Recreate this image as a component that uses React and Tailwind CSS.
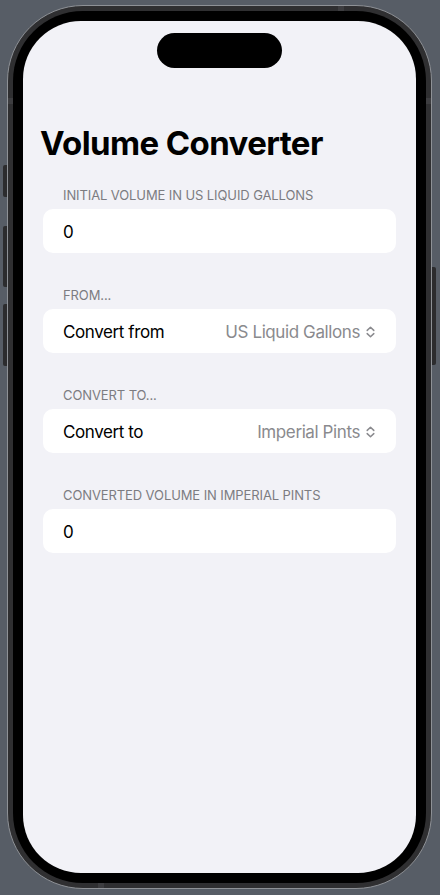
import React from "react";

function UpDown() {
  return (
    <svg width="9" height="12" viewBox="0 0 9 12" fill="none" className="shrink-0 -translate-y-[1px]">
      <path d="M1.2 4.4 L4.5 1.2 L7.8 4.4" stroke="#8a8a8e" strokeWidth="1.5" strokeLinecap="round" strokeLinejoin="round" />
      <path d="M1.2 7.6 L4.5 10.8 L7.8 7.6" stroke="#8a8a8e" strokeWidth="1.5" strokeLinecap="round" strokeLinejoin="round" />
    </svg>
  );
}

function Section({ title, children }) {
  return (
    <div className="flex flex-col">
      <div className="pl-[20px] text-[13px] leading-[16px] text-[#7c7c81] uppercase tracking-[-0.1px]">
        {title}
      </div>
      <div className="mt-[6px] h-[44px] rounded-[10px] bg-white flex items-center pl-[20px] pr-[21px] pt-[4px] text-[17px] tracking-[-0.4px] text-black">
        {children}
      </div>
    </div>
  );
}

function Picker({ label, value }) {
  return (
    <div className="flex w-full items-center justify-between">
      <span>{label}</span>
      <span className="flex items-center gap-[6px] text-[#8a8a8e]">
        {value}
        <UpDown />
      </span>
    </div>
  );
}

export default function App() {
  return (
    <div className="relative w-[440px] h-[895px] overflow-hidden bg-[#575d66] font-['Inter','Noto_Sans',sans-serif]">
      {/* side buttons */}
      <div className="absolute left-[3px] top-[165px] w-[5px] h-[32px] rounded-l-[2px] bg-[#2c2c2e]" />
      <div className="absolute left-[3px] top-[226px] w-[5px] h-[61px] rounded-l-[2px] bg-[#2c2c2e]" />
      <div className="absolute left-[3px] top-[304px] w-[5px] h-[62px] rounded-l-[2px] bg-[#2c2c2e]" />
      <div className="absolute left-[432px] top-[267px] w-[4px] h-[98px] rounded-r-[2px] bg-[#2c2c2e]" />

      <div className="pl-[7px] pt-[5px]">
        <div className="relative w-[425px] h-[884px] rounded-[76px] border border-[#8e9196] bg-[#2f2f31] p-[5px]">
          {/* antenna bands */}
          <div className="absolute left-0 top-[92px] w-[5px] h-[6px] bg-[#3d3d40]" />
          <div className="absolute right-0 top-[92px] w-[5px] h-[6px] bg-[#3d3d40]" />
          <div className="absolute left-[90px] bottom-0 w-[6px] h-[5px] bg-[#3d3d40]" />
          <div className="absolute left-[330px] top-0 w-[6px] h-[5px] bg-[#3d3d40]" />

          <div className="h-full rounded-[70px] bg-black p-[10px]">
            <div className="h-full rounded-[58px] bg-[#f2f2f7] overflow-hidden flex flex-col">
              <div className="mx-auto mt-[12px] w-[125px] h-[35px] rounded-full bg-black" />

              <h1 className="mt-[55px] pl-[17px] text-[33px] leading-[40px] font-bold text-black tracking-[-0.6px]">
                Volume Converter
              </h1>

              <div className="mt-[24px] px-[20px] flex flex-col gap-[34px]">
                <Section title="Initial volume in US Liquid Gallons">
                  <span>0</span>
                </Section>
                <Section title="From...">
                  <Picker label="Convert from" value="US Liquid Gallons" />
                </Section>
                <Section title="Convert to...">
                  <Picker label="Convert to" value="Imperial Pints" />
                </Section>
                <Section title="Converted volume in Imperial Pints">
                  <span>0</span>
                </Section>
              </div>
            </div>
          </div>
        </div>
      </div>
    </div>
  );
}
